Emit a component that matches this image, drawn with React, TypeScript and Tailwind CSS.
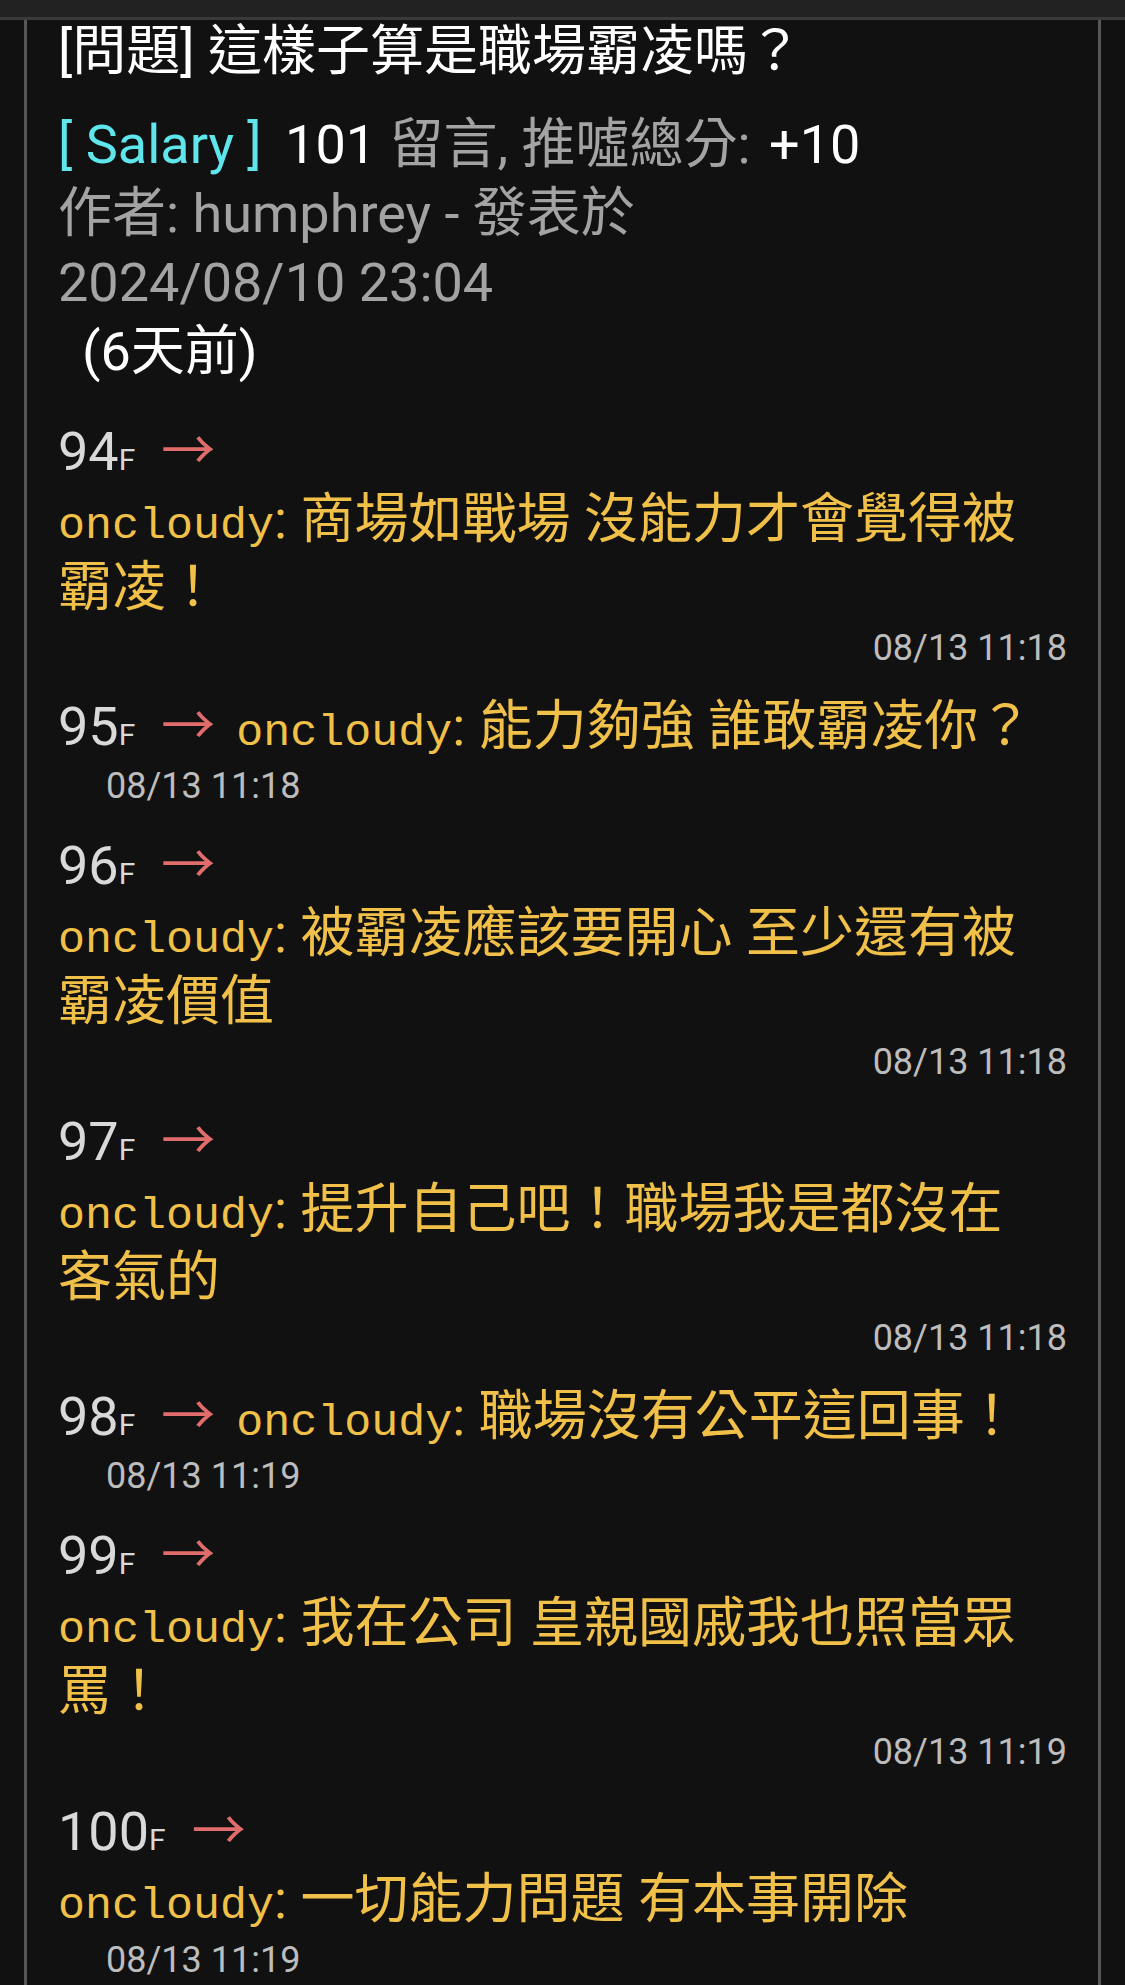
import React from "react";

const FONT = "font-[family-name:Roboto,'Noto_Sans_CJK_TC',sans-serif]";

function Floor({ n }: { n: string }) {
  return (
    <>
      <span className="text-[#d9d9d9]">{n}</span>
      <span className="text-[30px] leading-none text-[#d9d9d9]">F</span>
      <span className="ml-[26px] text-[#e06c6c]">→</span>
    </>
  );
}

function Nick() {
  return (
    <span className="font-[family-name:'Liberation_Mono',monospace] text-[45px] leading-none">oncloudy</span>
  );
}

type C = { n: string; text: string; date: string; kind: "A" | "B" | "C" };

const comments: C[] = [
  { n: "94", text: "商場如戰場 沒能力才會覺得被霸凌！", date: "08/13 11:18", kind: "A" },
  { n: "95", text: "能力夠強 誰敢霸凌你？", date: "08/13 11:18", kind: "B" },
  { n: "96", text: "被霸凌應該要開心 至少還有被霸凌價值", date: "08/13 11:18", kind: "A" },
  { n: "97", text: "提升自己吧！職場我是都沒在客氣的", date: "08/13 11:18", kind: "A" },
  { n: "98", text: "職場沒有公平這回事！", date: "08/13 11:19", kind: "B" },
  { n: "99", text: "我在公司 皇親國戚我也照當眾罵！", date: "08/13 11:19", kind: "A" },
  { n: "100", text: "一切能力問題 有本事開除", date: "08/13 11:19", kind: "C" },
];

function Comment({ c }: { c: C }) {
  if (c.kind === "B") {
    return (
      <div>
        <div className="whitespace-nowrap pt-[3px] text-[54px] leading-[68px]">
          <Floor n={c.n} />
          <span className="ml-[21px] text-[#f0c048]">
            <Nick />: {c.text}
          </span>
        </div>
        <div className="mt-[1px] pl-[48px] text-[36px] leading-[48px] text-[#bdbdbd]">{c.date}</div>
      </div>
    );
  }
  return (
    <div>
      <div className="pt-[4px] text-[54px] leading-[68px]">
        <Floor n={c.n} />
      </div>
      <div className="pr-[30px] text-[54px] leading-[68px] text-[#f0c048]">
        <Nick />: {c.text}
      </div>
      {c.kind === "A" ? (
        <div className="mt-[2px] text-right text-[36px] leading-[48px] text-[#bdbdbd]">{c.date}</div>
      ) : (
        <div className="mt-[2px] pl-[48px] text-[36px] leading-[48px] text-[#bdbdbd]">{c.date}</div>
      )}
    </div>
  );
}

export default function App() {
  return (
    <div className={`w-[1125px] h-[1985px] overflow-hidden bg-[#111111] ${FONT}`}>
      <div className="h-[20px] bg-[#222222] border-b-[3px] border-[#3a3a3a]" />
      <div className="ml-[24px] w-[1077px] h-[1965px] border-x-[3px] border-[#575757] px-[31px]">
        <div className="text-[54px] leading-[64px] text-white">[問題] 這樣子算是職場霸凌嗎？</div>
        <div className="mt-[26px] text-[54px] leading-[69px]">
          <div>
            <span className="text-[#5ee6ec]">[ Salary ]</span>{" "}
            <span className="ml-[10px] text-white">101</span>{" "}
            <span className="text-[#a3a3a3]">留言, 推噓總分:</span>{" "}
            <span className="ml-[5px] text-white">+10</span>
          </div>
          <div className="text-[#a3a3a3]">作者: humphrey - 發表於</div>
          <div className="text-[#a3a3a3]">2024/08/10 23:04</div>
          <div className="pl-[24px] text-white">(6天前)</div>
        </div>
        <div className="mt-[28px] flex flex-col gap-[18px]">
          {comments.map((c) => (
            <Comment key={c.n} c={c} />
          ))}
        </div>
      </div>
    </div>
  );
}
